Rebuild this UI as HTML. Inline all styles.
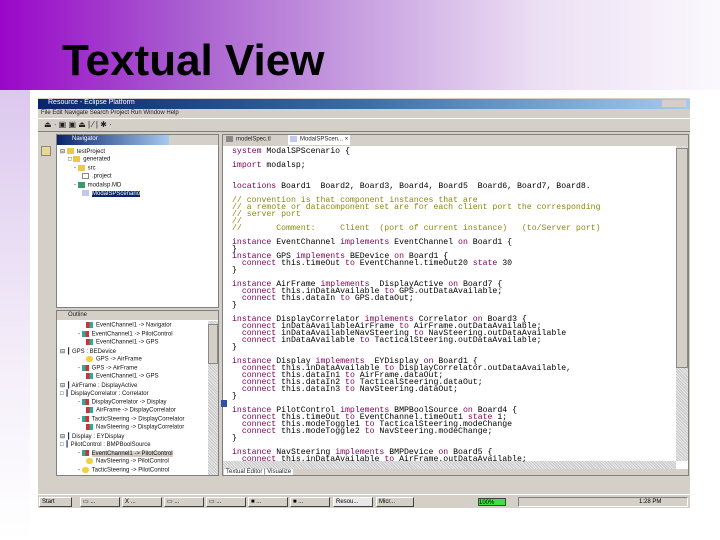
<!DOCTYPE html>
<html><head><meta charset="utf-8"><style>
*{margin:0;padding:0;box-sizing:border-box}
body{width:720px;height:540px;position:relative;overflow:hidden;background:#fff;font-family:"Liberation Sans",sans-serif}
.hdr{position:absolute;left:0;top:0;width:720px;height:90px;background:linear-gradient(90deg,#9a06c8 0%,#a85cd0 25%,#c8a0e0 50%,#ece0f4 75%,#fbf8fd 100%)}
.strip{position:absolute;left:0;top:90px;width:30px;height:450px;background:linear-gradient(180deg,#dcc8ee,#f4eef9 60%,#fff)}
.title{position:absolute;left:62px;top:36px;font:bold 44px "Liberation Sans",sans-serif;color:#000;letter-spacing:0}
.a{position:absolute}
.scr{position:absolute;left:38px;top:98px;width:652px;height:410px;background:#d4d0c8;overflow:hidden}
.tb{left:0;top:1px;width:652px;height:10px;background:linear-gradient(90deg,#0a246a,#3a6ea5 50%,#a6caf0)}
.tt{color:#fff;font-size:7px;left:10px;top:1px}
.sm{font-size:6px;color:#222;white-space:nowrap}
.pane{background:#fff;border:1px solid #808080}
.code{position:absolute;left:232px;top:147px;width:442px;height:315px;overflow:hidden;font:8.2px/7px "Liberation Mono",monospace;color:#000;white-space:pre;padding-top:1px}
.k{color:#7f0055}.c{color:#8a8a10}
.tree div{position:absolute;font-size:6px;white-space:nowrap;color:#111}
.ic{display:inline-block;width:7px;height:6px;vertical-align:middle;margin-right:3px}
.tk{position:absolute;top:497px;height:10px;border:1px solid;border-color:#fff #404040 #404040 #fff;background:#d4d0c8;font-size:6px;line-height:8px;padding-left:2px}
</style></head><body>
<div class="hdr"></div>
<div class="strip"></div>
<div class="title">Textual View</div>

<div class="scr">
 <div class="a tb"></div>
 <div class="a tt">Resource - Eclipse Platform</div>
 <div class="a" style="right:4px;top:2px;width:24px;height:7px;background:#d4d0c8"></div>
 <div class="a sm" style="left:3px;top:12px">File  Edit  Navigate  Search  Project  Run  Window  Help</div>
 <div class="a" style="left:0;top:20px;width:652px;height:1px;background:#fff"></div>
 <div class="a sm" style="left:6px;top:22px;font-size:8px">⏏ ·  ▣ ▣ ⏏ | ⁄ | ✱ ·</div>
 <div class="a" style="left:0;top:33px;width:652px;height:1px;background:#808080"></div>
 <div class="a" style="left:3px;top:48px;width:10px;height:10px;background:#e8d890;border:1px solid #888"></div>
 <div class="a pane" style="left:18px;top:36px;width:163px;height:174px"></div>
 <div class="a" style="left:19px;top:37px;width:112px;height:10px;background:linear-gradient(90deg,#0a246a,#a6caf0)"></div>
 <div class="a" style="left:131px;top:37px;width:49px;height:10px;background:#d4d0c8"></div>
 <div class="a" style="left:34px;top:38px;font-size:6px;color:#fff">Navigator</div>
 <div class="tree">
  <div style="left:22px;top:50px">⊟ <span class="ic" style="background:#e8c850"></span>testProject</div>
  <div style="left:30px;top:58px">□ <span class="ic" style="background:#e8c850"></span>generated</div>
  <div style="left:36px;top:67px">- <span class="ic" style="background:#e8c850"></span>src</div>
  <div style="left:44px;top:75px"><span class="ic" style="background:#fff;border:1px solid #888"></span>.project</div>
  <div style="left:36px;top:84px">- <span class="ic" style="background:#3a9a6a"></span>modalsp.MD</div>
  <div style="left:44px;top:92px"><span class="ic" style="background:#c0c8f0"></span><span style="background:#0a246a;color:#fff">ModalSPScenario</span></div>
 </div>
 <div class="a pane" style="left:18px;top:212px;width:163px;height:166px"></div>
 <div class="a" style="left:19px;top:213px;width:161px;height:9px;background:#d4d0c8"></div>
 <div class="a sm" style="left:30px;top:214px">Outline</div>
 <div class="a" style="left:170px;top:223px;width:10px;height:154px;background:repeating-linear-gradient(45deg,#e8e8e8 0 1px,#c8c8c8 1px 2px)"></div>
 <div class="a" style="left:170px;top:226px;width:10px;height:40px;background:#d4d0c8;border:1px solid #888"></div>
 <div class="tree">
  <div style="left:48px;top:224px"><span class="ic" style="background:linear-gradient(90deg,#c33 50%,#3a9 50%)"></span>EventChannel1 -&gt; Navigator</div>
  <div style="left:40px;top:233px">- <span class="ic" style="background:linear-gradient(90deg,#3a9 50%,#c33 50%)"></span>EventChannel1 -&gt; PilotControl</div>
  <div style="left:48px;top:241px"><span class="ic" style="background:linear-gradient(90deg,#c33 50%,#3a9 50%)"></span>EventChannel1 -&gt; GPS</div>
  <div style="left:22px;top:250px">⊟ <b style="color:#135">┃</b> GPS : BEDevice</div>
  <div style="left:48px;top:258px"><span class="ic" style="background:#f0d040;border-radius:3px"></span>GPS -&gt; AirFrame</div>
  <div style="left:40px;top:267px">- <span class="ic" style="background:linear-gradient(90deg,#3a9 50%,#c33 50%)"></span>GPS -&gt; AirFrame</div>
  <div style="left:48px;top:275px"><span class="ic" style="background:linear-gradient(90deg,#c33 50%,#3a9 50%)"></span>EventChannel1 -&gt; GPS</div>
  <div style="left:22px;top:284px">⊟ <b style="color:#135">┃</b> AirFrame : DisplayActive</div>
  <div style="left:22px;top:292px">□ <b style="color:#135">┃</b> DisplayCorrelator : Correlator</div>
  <div style="left:40px;top:301px">- <span class="ic" style="background:linear-gradient(90deg,#3a9 50%,#c33 50%)"></span>DisplayCorrelator -&gt; Display</div>
  <div style="left:48px;top:309px"><span class="ic" style="background:linear-gradient(90deg,#c33 50%,#3a9 50%)"></span>AirFrame -&gt; DisplayCorrelator</div>
  <div style="left:40px;top:318px">- <span class="ic" style="background:linear-gradient(90deg,#3a9 50%,#c33 50%)"></span>TacticSteering -&gt; DisplayCorrelator</div>
  <div style="left:48px;top:326px"><span class="ic" style="background:linear-gradient(90deg,#c33 50%,#3a9 50%)"></span>NavSteering -&gt; DisplayCorrelator</div>
  <div style="left:22px;top:335px">⊟ <b style="color:#135">┃</b> Display : EYDisplay</div>
  <div style="left:22px;top:343px">□ <b style="color:#135">┃</b> PilotControl : BMPBoolSource</div>
  <div style="left:40px;top:352px">- <span class="ic" style="background:linear-gradient(90deg,#3a9 50%,#c33 50%)"></span><span style="background:#d4d0c8">EventChannel1 -&gt; PilotControl</span></div>
  <div style="left:48px;top:360px"><span class="ic" style="background:#f0d040;border-radius:3px"></span>NavSteering -&gt; PilotControl</div>
  <div style="left:40px;top:369px">- <span class="ic" style="background:#f0d040;border-radius:3px"></span>TacticSteering -&gt; PilotControl</div>
 </div>
 <div class="a pane" style="left:184px;top:36px;width:467px;height:342px"></div>
 <div class="a" style="left:185px;top:37px;width:465px;height:11px;background:#d4d0c8"></div>
 <div class="a sm" style="left:188px;top:38px"><span class="ic" style="background:#888"></span>modelSpec.tl</div>
 <div class="a sm" style="left:250px;top:37px;background:#fff;height:10px;width:62px;padding:1px 2px"><span class="ic" style="background:#c0c8f0"></span>ModalSPScen... ×</div>
 <div class="a" style="left:638px;top:48px;width:12px;height:315px;background:repeating-linear-gradient(45deg,#e8e8e8 0 1px,#c8c8c8 1px 2px)"></div>
 <div class="a" style="left:638px;top:50px;width:12px;height:220px;background:#d4d0c8;border:1px solid #888"></div>
 <div class="a" style="left:185px;top:363px;width:453px;height:8px;background:repeating-linear-gradient(45deg,#e8e8e8 0 1px,#c8c8c8 1px 2px)"></div>
 <div class="a" style="left:185px;top:371px;width:465px;height:6px;background:#d4d0c8"></div>
 <div class="a sm" style="left:186px;top:371px;background:#fff;padding:0 2px;line-height:6px">Textual Editor | Visualize</div>
 <div class="a" style="left:183px;top:302px;width:6px;height:7px;background:#3050a0"></div>
 <div class="a" style="left:0;top:396px;width:652px;height:14px;background:#d4d0c8;border-top:1px solid #fff"></div>
</div>
<div class="tk" style="left:39px;width:33px">Start</div>
<div class="tk" style="left:80px;width:40px">▭ ...</div>
<div class="tk" style="left:122px;width:40px">X ...</div>
<div class="tk" style="left:164px;width:40px">▭ ...</div>
<div class="tk" style="left:206px;width:40px">▭ ...</div>
<div class="tk" style="left:248px;width:40px">■ ...</div>
<div class="tk" style="left:290px;width:40px">■ ...</div>
<div class="tk" style="left:333px;width:40px;background:#e8e8e8">Resou...</div>
<div class="tk" style="left:376px;width:38px">Micr...</div>
<div class="a" style="left:478px;top:498px;width:28px;height:8px;background:#40e040;font-size:6px;line-height:8px;border:1px solid #444">100%</div>
<div class="a" style="left:518px;top:497px;width:170px;height:10px;border:1px solid;border-color:#808080 #fff #fff #808080;font-size:6px;line-height:8px;padding-left:120px">1:28 PM</div>

<div class="code"><span class="k">system</span> ModalSPScenario {

<span class="k">import</span> modalsp;


<span class="k">locations</span> Board1  Board2, Board3, Board4, Board5  Board6, Board7, Board8.

<span class="c">// convention is that component instances that are
// a remote or datacomponent set are for each client port the corresponding
// server port
//
//       Comment:     Client  (port of current instance)   (to/Server port)</span>

<span class="k">instance</span> EventChannel <span class="k">implements</span> EventChannel <span class="k">on</span> Board1 {
}
<span class="k">instance</span> GPS <span class="k">implements</span> BEDevice <span class="k">on</span> Board1 {
  <span class="k">connect</span> this.timeOut <span class="k">to</span> EventChannel.timeOut20 <span class="k">state</span> 30
}

<span class="k">instance</span> AirFrame <span class="k">implements</span>  DisplayActive <span class="k">on</span> Board7 {
  <span class="k">connect</span> this.inDataAvailable <span class="k">to</span> GPS.outDataAvailable;
  <span class="k">connect</span> this.dataIn <span class="k">to</span> GPS.dataOut;
}

<span class="k">instance</span> DisplayCorrelator <span class="k">implements</span> Correlator <span class="k">on</span> Board3 {
  <span class="k">connect</span> inDataAvailableAirFrame <span class="k">to</span> AirFrame.outDataAvailable;
  <span class="k">connect</span> inDataAvailableNavSteering <span class="k">to</span> NavSteering.outDataAvailable
  <span class="k">connect</span> inDataAvailable <span class="k">to</span> TacticalSteering.outDataAvailable;
}

<span class="k">instance</span> Display <span class="k">implements</span>  EYDisplay <span class="k">on</span> Board1 {
  <span class="k">connect</span> this.inDataAvailable <span class="k">to</span> DisplayCorrelator.outDataAvailable,
  <span class="k">connect</span> this.dataIn1 <span class="k">to</span> AirFrame.dataOut;
  <span class="k">connect</span> this.dataIn2 <span class="k">to</span> TacticalSteering.dataOut;
  <span class="k">connect</span> this.dataIn3 <span class="k">to</span> NavSteering.dataOut;
}

<span class="k">instance</span> PilotControl <span class="k">implements</span> BMPBoolSource <span class="k">on</span> Board4 {
  <span class="k">connect</span> this.timeOut <span class="k">to</span> EventChannel.timeOut1 <span class="k">state</span> 1;
  <span class="k">connect</span> this.modeToggle1 <span class="k">to</span> TacticalSteering.modeChange
  <span class="k">connect</span> this.modeToggle2 <span class="k">to</span> NavSteering.modeChange;
}

<span class="k">instance</span> NavSteering <span class="k">implements</span> BMPDevice <span class="k">on</span> Board5 {
  <span class="k">connect</span> this.inDataAvailable <span class="k">to</span> AirFrame.outDataAvailable;</div>
</body></html>
